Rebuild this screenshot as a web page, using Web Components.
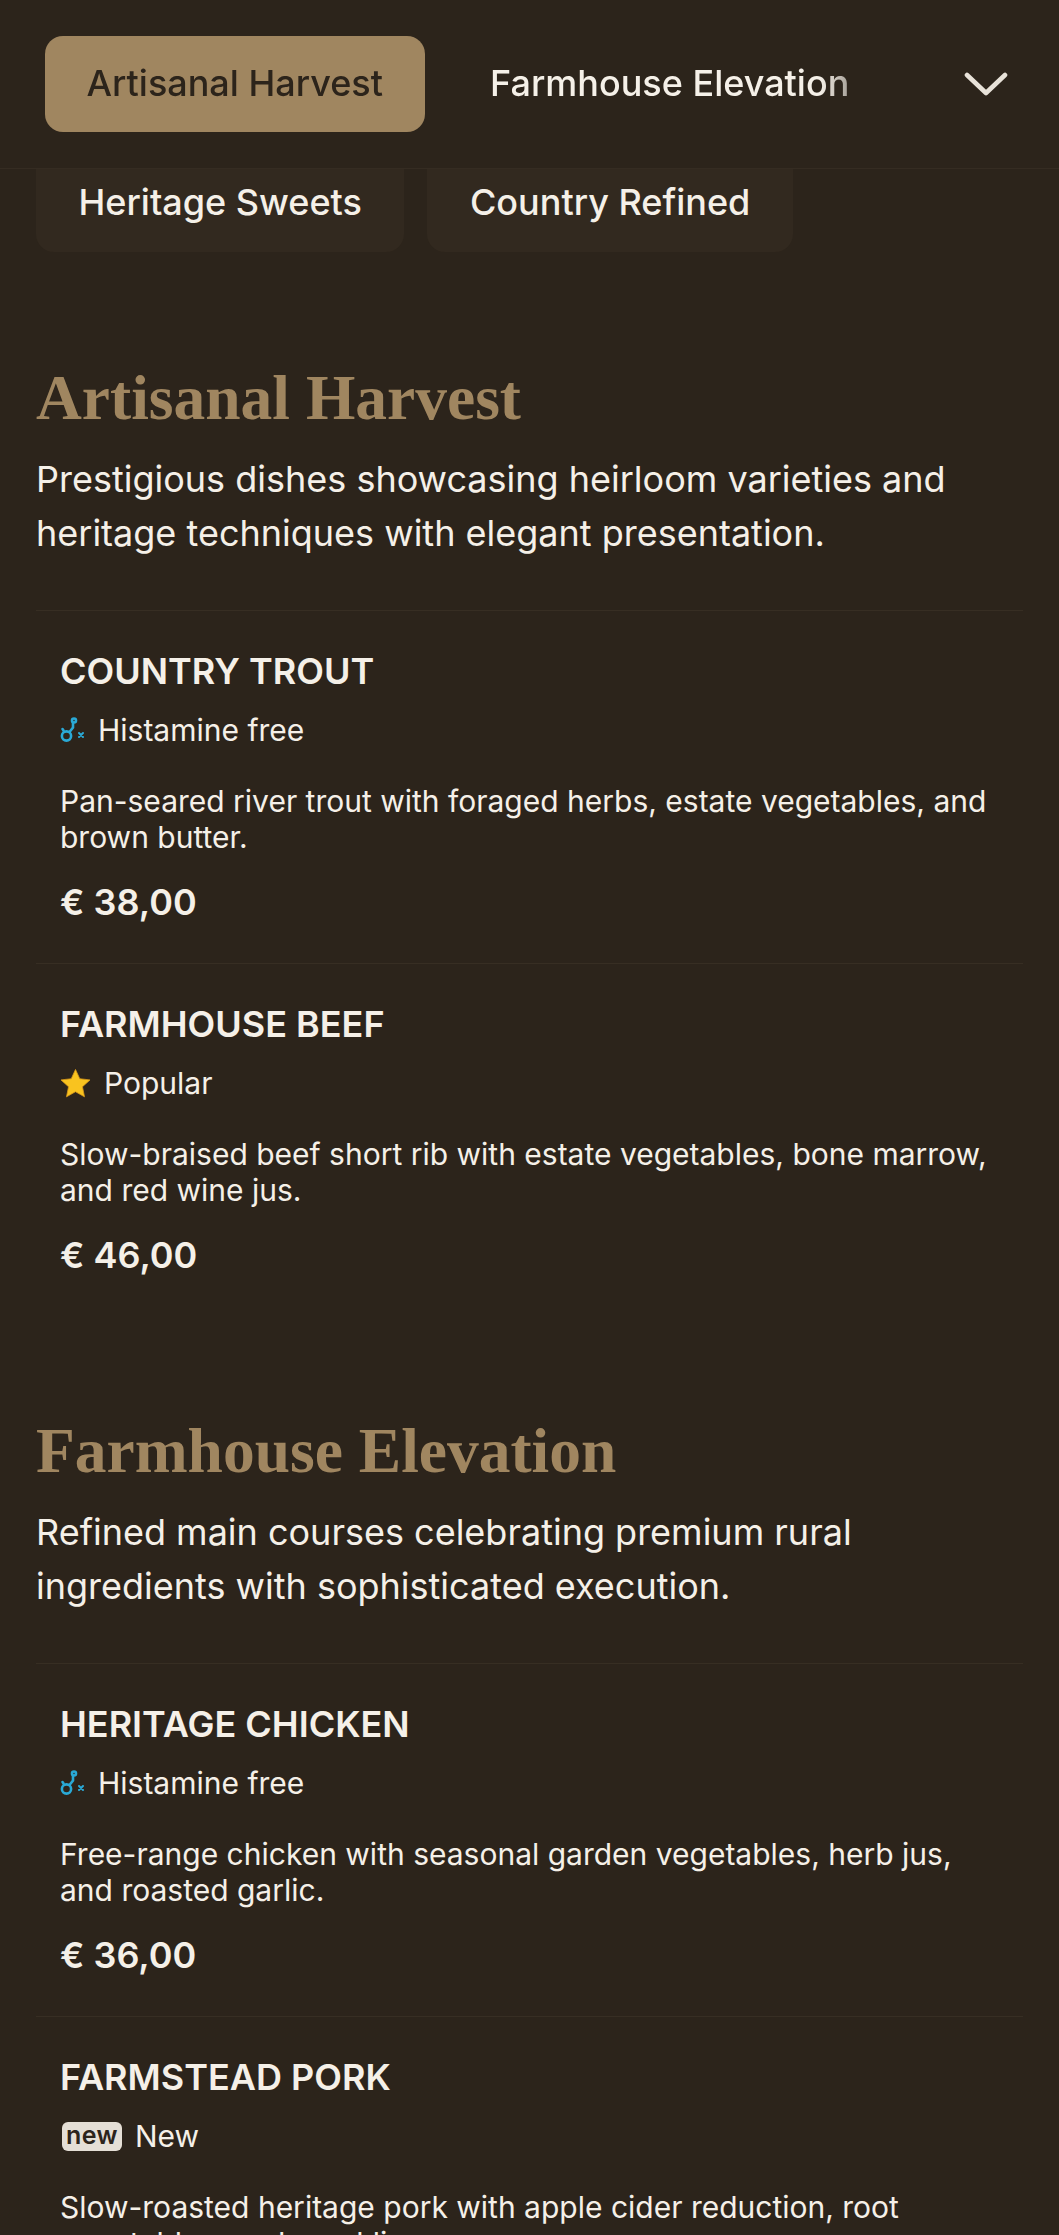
<!DOCTYPE html>
<html lang="en">
<head>
<meta charset="utf-8">
<title>Menu</title>
<style>
  html, body { margin: 0; padding: 0; background: #2c241b; }
  body { height: 2235px; overflow: hidden; color: #f5f0e8; font-family: Inter, "Liberation Sans", sans-serif; }
</style>
</head>
<body>
<menu-nav>
  <nav-tab slot="top" active>Artisanal Harvest</nav-tab>
  <nav-tab slot="top">Farmhouse Elevation</nav-tab>
  <nav-tab slot="more" chip>Heritage Sweets</nav-tab>
  <nav-tab slot="more" chip>Country Refined</nav-tab>
</menu-nav>

<menu-section title="Artisanal Harvest" intro="Prestigious dishes showcasing heirloom varieties and heritage techniques with elegant presentation.">
  <menu-item name="COUNTRY TROUT" price="€ 38,00">
    <item-tag kind="histamine">Histamine free</item-tag>
    Pan-seared river trout with foraged herbs, estate vegetables, and brown butter.
  </menu-item>
  <menu-item name="FARMHOUSE BEEF" price="€ 46,00">
    <item-tag kind="popular">Popular</item-tag>
    Slow-braised beef short rib with estate vegetables, bone marrow, and red wine jus.
  </menu-item>
</menu-section>

<menu-section title="Farmhouse Elevation" intro="Refined main courses celebrating premium rural ingredients with sophisticated execution.">
  <menu-item name="HERITAGE CHICKEN" price="€ 36,00">
    <item-tag kind="histamine">Histamine free</item-tag>
    Free-range chicken with seasonal garden vegetables, herb jus, and roasted garlic.
  </menu-item>
  <menu-item name="FARMSTEAD PORK" price="€ 42,00">
    <item-tag kind="new">New</item-tag>
    Slow-roasted heritage pork with apple cider reduction, root vegetables, and crackling.
  </menu-item>
</menu-section>

<script>
const navTemplate = document.createElement('template')
navTemplate.innerHTML = `
  <style>
    :host { display: block; margin-bottom: 11px; }
    .bar {
      display: flex;
      align-items: center;
      height: 168px;
      padding-left: 45px;
      border-bottom: 1px solid #352c22;
    }
    .top {
      display: flex;
      align-items: center;
      gap: 24px;
      width: 828px;
      overflow: hidden;
      -webkit-mask-image: linear-gradient(to right, #000 775px, rgba(0,0,0,.6) 805px);
      mask-image: linear-gradient(to right, #000 775px, rgba(0,0,0,.6) 805px);
    }
    svg { margin-left: 91px; flex: none; }
    .more {
      display: flex;
      gap: 23px;
      padding-left: 36px;
    }
  </style>
  <div class="bar">
    <div class="top"><slot name="top"></slot></div>
    <svg width="44" height="26" viewBox="0 0 44 26" fill="none" stroke="#e8e2d9" stroke-width="4.6" stroke-linecap="round" stroke-linejoin="round"><path d="M3 4 L22 22 L41 4"/></svg>
  </div>
  <div class="more"><slot name="more"></slot></div>
`

class MenuNav extends HTMLElement {
  constructor() {
    super()
    const shadow = this.attachShadow({ mode: 'open' })
    shadow.append(navTemplate.content.cloneNode(true))
  }
}

const tabTemplate = document.createElement('template')
tabTemplate.innerHTML = `
  <style>
    :host {
      display: block;
      flex: none;
      box-sizing: border-box;
      height: 96px;
      padding: 0 41.5px;
      line-height: 94px;
      font-size: 36px;
      font-weight: 500;
      color: #f5f0e8;
      border-radius: 18px;
      white-space: nowrap;
    }
    :host([active]) { background: #a08660; color: #2c241b; }
    :host([chip]) {
      height: 83px;
      padding: 0 42.5px;
      line-height: 66px;
      background: #32291f;
      border-radius: 0 0 18px 18px;
    }
  </style>
  <slot></slot>
`

class NavTab extends HTMLElement {
  constructor() {
    super()
    const shadow = this.attachShadow({ mode: 'open' })
    shadow.append(tabTemplate.content.cloneNode(true))
  }
}

const sectionTemplate = document.createElement('template')
sectionTemplate.innerHTML = `
  <style>
    :host { display: block; padding: 97px 36px 0; }
    h2 {
      margin: 0;
      font-family: "Liberation Serif", serif;
      font-weight: 700;
      font-size: 63.5px;
      line-height: 76px;
      color: #a08660;
    }
    p {
      margin: 16px 0 0;
      font-size: 36px;
      line-height: 54px;
      color: #f5f0e8;
    }
    .items { margin-top: 50px; }
  </style>
  <h2></h2>
  <p></p>
  <div class="items"><slot></slot></div>
`

class MenuSection extends HTMLElement {
  constructor() {
    super()
    const shadow = this.attachShadow({ mode: 'open' })
    shadow.append(sectionTemplate.content.cloneNode(true))
    shadow.querySelector('h2').textContent = this.getAttribute('title')
    shadow.querySelector('p').textContent = this.getAttribute('intro')
  }
}

const itemTemplate = document.createElement('template')
itemTemplate.innerHTML = `
  <style>
    :host {
      display: block;
      height: 353px;
      box-sizing: border-box;
      padding: 40px 30px 0 24px;
      border-top: 1px solid #372e23;
    }
    h3 {
      margin: 0;
      font-size: 36px;
      line-height: 40px;
      font-weight: 600;
      color: #f5f0e8;
    }
    .desc {
      display: block;
      font-size: 30px;
      line-height: 36px;
      color: #f5f0e8;
    }
    .price {
      margin-top: 27px;
      font-size: 36px;
      line-height: 40px;
      font-weight: 600;
    }
  </style>
  <h3></h3>
  <div class="desc"><slot></slot></div>
  <div class="price"></div>
`

class MenuItem extends HTMLElement {
  constructor() {
    super()
    const shadow = this.attachShadow({ mode: 'open' })
    shadow.append(itemTemplate.content.cloneNode(true))
    shadow.querySelector('h3').textContent = this.getAttribute('name')
    shadow.querySelector('.price').textContent = this.getAttribute('price')
  }
}

const tagIcons = {
  histamine: `<svg width="25" height="26" viewBox="0 0 25 26" fill="none" stroke="#2aa9d6" stroke-width="2.6" stroke-linecap="round">
    <circle cx="6.5" cy="19" r="4.6"/><path d="M9.5 15 L13 10.5 V6"/><circle cx="14" cy="3.5" r="2"/><path d="M2.5 12 L3.5 13.5"/>
    <path d="M19 16 L23 20 M23 16 L19 20" stroke-width="2"/></svg>`,
  popular: `<svg width="31" height="30" viewBox="0 0 32 30"><path d="M16 1 L20.4 10.6 L31 11.8 L23.2 18.9 L25.3 29.3 L16 24 L6.7 29.3 L8.8 18.9 L1 11.8 L11.6 10.6 Z" fill="#f9c31f" stroke="#d9991a" stroke-width=".8"/></svg>`,
  new: `<span class="new">new</span>`
}

const tagTemplate = document.createElement('template')
tagTemplate.innerHTML = `
  <style>
    :host {
      display: flex;
      align-items: center;
      gap: 13px;
      height: 36px;
      margin: 21px 0 35px;
      font-size: 30px;
      color: #f5f0e8;
    }
    .icon { display: flex; }
    svg { display: block; }
    .new {
      display: block;
      width: 60px;
      height: 29px;
      margin-left: 2px;
      line-height: 26px;
      text-align: center;
      background: #e5dfd6;
      color: #2c241b;
      border-radius: 6px;
      font-size: 25px;
      font-weight: 600;
      letter-spacing: .5px;
    }
  </style>
  <span class="icon"></span>
  <slot></slot>
`

class ItemTag extends HTMLElement {
  constructor() {
    super()
    const shadow = this.attachShadow({ mode: 'open' })
    shadow.append(tagTemplate.content.cloneNode(true))
    shadow.querySelector('.icon').innerHTML = tagIcons[this.getAttribute('kind')]
  }
}

customElements.define('menu-nav', MenuNav)
customElements.define('nav-tab', NavTab)
customElements.define('menu-section', MenuSection)
customElements.define('menu-item', MenuItem)
customElements.define('item-tag', ItemTag)
</script>
</body>
</html>
